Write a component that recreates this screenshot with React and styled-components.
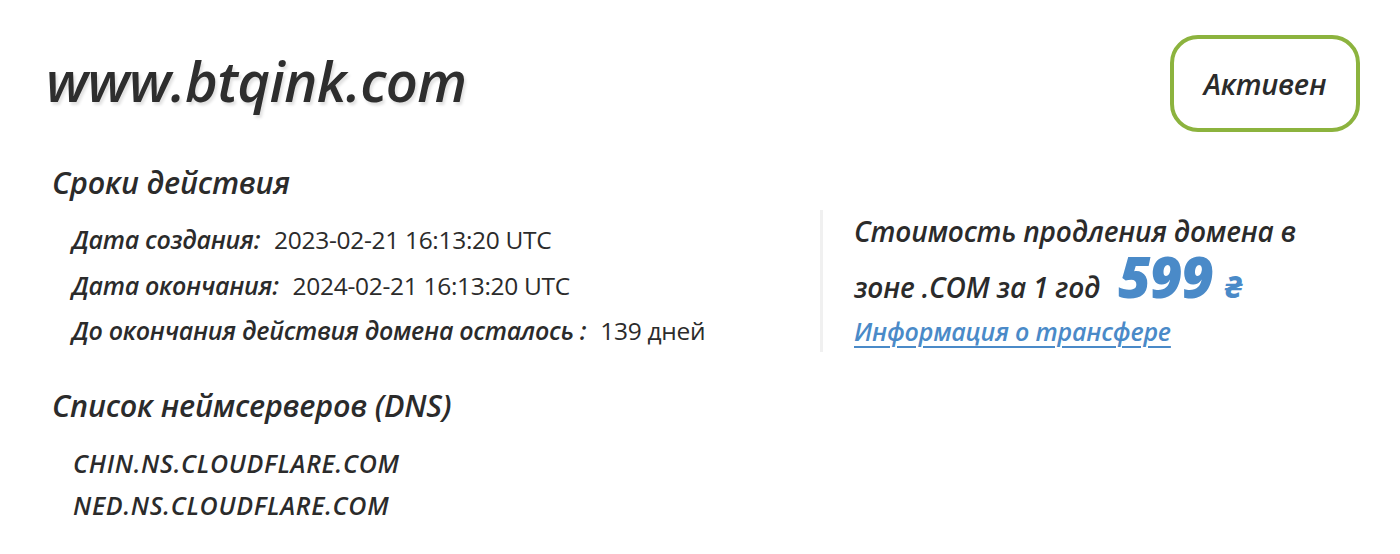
import React from "react";
import styled, { createGlobalStyle } from "styled-components";

const Global = createGlobalStyle`
  html, body {
    margin: 0;
    padding: 0;
    background: #ffffff;
  }
  body {
    font-family: "Open Sans", "Noto Sans", sans-serif;
    color: #2b2b2b;
  }
`;

const Card = styled.div`
  width: 1400px;
  height: 554px;
  box-sizing: border-box;
  padding: 35px 40px 0 48px;
  background: #fff;
  overflow: hidden;
`;

const Header = styled.div`
  display: flex;
  justify-content: space-between;
  align-items: flex-start;
`;

const Domain = styled.h1`
  margin: 10px 0 0 -2px;
  font-size: 56px;
  line-height: 70px;
  font-weight: 600;
  font-style: italic;
  letter-spacing: -0.6px;
  color: #2e2e2e;
  text-shadow: 2px 3px 3px rgba(0, 0, 0, 0.12);
`;

const Status = styled.div`
  width: 190px;
  height: 97px;
  box-sizing: border-box;
  border: 4px solid #8cb33e;
  border-radius: 28px;
  display: flex;
  align-items: center;
  justify-content: center;
  font-size: 29px;
  font-style: italic;
  font-weight: 600;
  letter-spacing: -0.3px;
  color: #2b2b2b;
`;

const SectionTitle = styled.h2`
  margin: ${(p) => p.$top || 0}px 0 0 4px;
  font-size: 30.5px;
  line-height: 40px;
  height: 40px;
  font-weight: 600;
  font-style: italic;
  letter-spacing: -0.2px;
  color: #2b2b2b;
`;

const Split = styled.div`
  display: flex;
  align-items: flex-start;
  height: 150px;
`;

const Terms = styled.div`
  width: 772px;
  padding: 15px 0 0 24px;
  box-sizing: border-box;
`;

const TermRow = styled.div`
  font-size: 25px;
  line-height: 45.5px;
  height: 45.5px;
  white-space: nowrap;
`;

const TermLabel = styled.span`
  font-style: italic;
  font-weight: 600;
  letter-spacing: -0.3px;
  margin-right: 14px;
`;

const TermValue = styled.span`
  font-size: 24.5px;
  font-weight: 400;
  letter-spacing: -0.3px;
`;

const PriceBox = styled.div`
  margin-top: 8px;
  height: 142px;
  box-sizing: border-box;
  border-left: 3px solid #f0f0f0;
  padding: 4px 0 0 31px;
`;

const PriceLine = styled.div`
  font-size: 28px;
  line-height: ${(p) => p.$lh}px;
  height: ${(p) => p.$lh}px;
  font-style: italic;
  font-weight: 600;
  letter-spacing: -0.2px;
  color: #2b2b2b;
  white-space: nowrap;
`;

const Amount = styled.span`
  font-size: 56px;
  line-height: 1;
  font-weight: 800;
  color: #4a8ac8;
  margin-left: 18px;
  letter-spacing: -1px;
`;

const Currency = styled.span`
  font-size: 31px;
  line-height: 1;
  font-weight: 800;
  color: #4a8ac8;
  margin-left: 12px;
`;

const TransferLink = styled.a`
  display: block;
  font-size: 25px;
  line-height: 22px;
  font-style: italic;
  font-weight: 600;
  letter-spacing: -0.2px;
  color: #4a8ac8;
  text-decoration: underline;
  text-decoration-thickness: 2px;
  text-underline-offset: 5px;
`;

const NsList = styled.div`
  padding: 17px 0 0 25px;
`;

const NsRow = styled.div`
  font-size: 25px;
  line-height: 42px;
  height: 42px;
  font-style: italic;
  font-weight: 600;
  letter-spacing: 0.7px;
  color: #2b2b2b;
`;

const terms = [
  { label: "Дата создания:", value: "2023-02-21 16:13:20 UTC" },
  { label: "Дата окончания:", value: "2024-02-21 16:13:20 UTC" },
  { label: "До окончания действия домена осталось :", value: "139 дней" },
];

const servers = ["CHIN.NS.CLOUDFLARE.COM", "NED.NS.CLOUDFLARE.COM"];

export default function App() {
  return (
    <>
      <Global />
      <Card>
        <Header>
          <Domain>www.btqink.com</Domain>
          <Status>Активен</Status>
        </Header>
        <SectionTitle $top={30}>Сроки действия</SectionTitle>
        <Split>
          <Terms>
            {terms.map((t) => (
              <TermRow key={t.label}>
                <TermLabel>{t.label}</TermLabel>
                <TermValue>{t.value}</TermValue>
              </TermRow>
            ))}
          </Terms>
          <PriceBox>
            <PriceLine $lh={34}>Стоимость продления домена в</PriceLine>
            <PriceLine $lh={72}>
              зоне .COM за 1 год
              <Amount>599</Amount>
              <Currency>₴</Currency>
            </PriceLine>
            <TransferLink href="#">Информация о трансфере</TransferLink>
          </PriceBox>
        </Split>
        <SectionTitle $top={33}>Список неймсерверов (DNS)</SectionTitle>
        <NsList>
          {servers.map((s) => (
            <NsRow key={s}>{s}</NsRow>
          ))}
        </NsList>
      </Card>
    </>
  );
}
